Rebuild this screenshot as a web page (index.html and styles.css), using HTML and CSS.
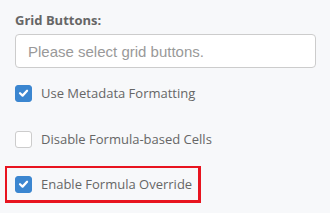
FILE: index.html
```html
<!DOCTYPE html>
<html lang="en">
<head>
    <meta charset="UTF-8">
    <meta name="viewport" content="width=device-width, initial-scale=1.0">
    <title>Grid Settings</title>
    <link rel="stylesheet" href="styles.css">
</head>
<body>
    <div class="panel">
        <label class="field-label" for="gridButtons">Grid Buttons:</label>
        <input type="text" id="gridButtons" class="select-input" placeholder="Please select grid buttons.">

        <label class="check-row">
            <span class="box checked">
                <svg viewBox="0 0 16 16" width="16" height="16"><path d="M4.3 8.3 L7 10.8 L11.8 5.6" fill="none" stroke="#fff" stroke-width="2.4" stroke-linecap="round" stroke-linejoin="round"/></svg>
            </span>
            Use Metadata Formatting
        </label>

        <label class="check-row">
            <span class="box"></span>
            Disable Formula-based Cells
        </label>

        <div class="highlight">
            <label class="check-row">
                <span class="box checked">
                    <svg viewBox="0 0 16 16" width="16" height="16"><path d="M4.3 8.3 L7 10.8 L11.8 5.6" fill="none" stroke="#fff" stroke-width="2.4" stroke-linecap="round" stroke-linejoin="round"/></svg>
                </span>
                Enable Formula Override
            </label>
        </div>
    </div>
</body>
</html>
```

FILE: styles.css
```css
body {
    margin: 0;
    background-color: #f7f8fa;
    font-family: "Open Sans", sans-serif;
    color: #666;
}

.panel {
    display: flex;
    flex-direction: column;
    align-items: flex-start;
    padding: 11px 14px 0 15px;
}

.field-label {
    font-size: 13px;
    font-weight: bold;
    line-height: 18px;
    color: #666;
}

.select-input {
    width: 100%;
    height: 34px;
    margin-top: 5px;
    padding: 0 12px;
    border: 1px solid #ccc;
    border-radius: 4px;
    background-color: white;
    box-sizing: border-box;
    font-family: "Liberation Sans", Arial, sans-serif;
    font-size: 15px;
}

.select-input::placeholder {
    color: #999;
}

.check-row {
    display: flex;
    align-items: center;
    gap: 9px;
    height: 20px;
    font-size: 13px;
    color: #666;
    cursor: pointer;
}

.panel > .check-row:nth-of-type(2) {
    margin-top: 15px;
}

.panel > .check-row:nth-of-type(3) {
    margin-top: 26px;
}

.box {
    width: 17px;
    height: 17px;
    box-sizing: border-box;
    border: 1px solid #ccc;
    border-radius: 3px;
    background-color: white;
    display: flex;
    align-items: center;
    justify-content: center;
}

.box.checked {
    background-color: #3b86d0;
    border-color: #3b86d0;
}

.highlight {
    margin: 17px 0 0 -10px;
    padding: 6px 6px 6px 8px;
    border: 2px solid #e8141f;
    border-width: 2px 3px 3px 2px;
}
```
